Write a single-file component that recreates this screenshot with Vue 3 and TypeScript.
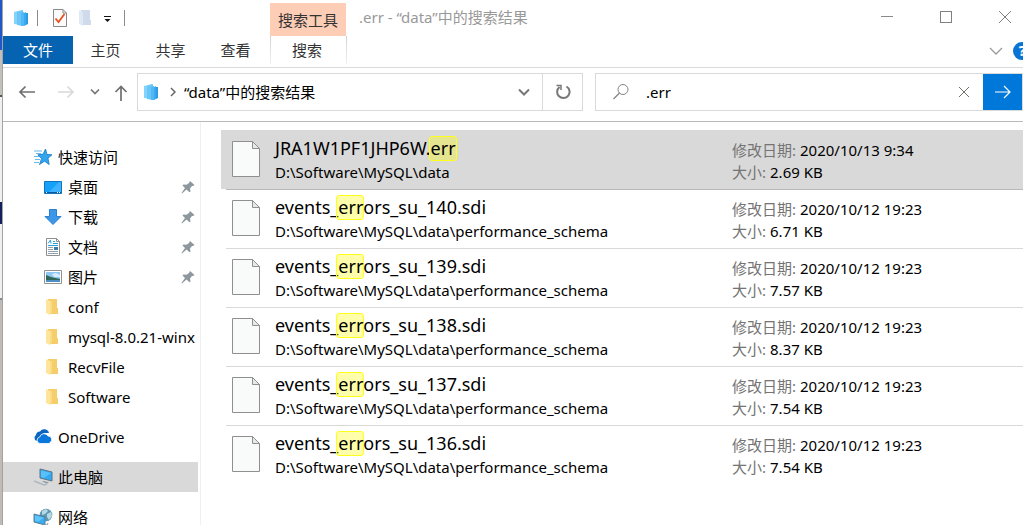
<script setup lang="ts">
import { ref } from 'vue'

interface Place {
  name: string
  icon: 'star' | 'desktop' | 'download' | 'document' | 'picture' | 'folder' | 'cloud' | 'pc' | 'network'
  root?: boolean
  pinned?: boolean
  active?: boolean
}
interface Result {
  before: string
  match: string
  after: string
  path: string
  date: string
  size: string
}

const query = ref('.err')
const tabs: string[] = ['主页', '共享', '查看']

const groups: Place[][] = [
  [
    { name: '快速访问', icon: 'star', root: true },
    { name: '桌面', icon: 'desktop', pinned: true },
    { name: '下载', icon: 'download', pinned: true },
    { name: '文档', icon: 'document', pinned: true },
    { name: '图片', icon: 'picture', pinned: true },
    { name: 'conf', icon: 'folder' },
    { name: 'mysql-8.0.21-winx', icon: 'folder' },
    { name: 'RecvFile', icon: 'folder' },
    { name: 'Software', icon: 'folder' },
  ],
  [{ name: 'OneDrive', icon: 'cloud', root: true }],
  [{ name: '此电脑', icon: 'pc', root: true, active: true }],
  [{ name: '网络', icon: 'network', root: true }],
]

const schema = 'D:\\Software\\MySQL\\data\\performance_schema'
const event = (id: number, size: string): Result => ({
  before: 'events_',
  match: 'err',
  after: `ors_su_${id}.sdi`,
  path: schema,
  date: '2020/10/12 19:23',
  size,
})
const results: Result[] = [
  { before: 'JRA1W1PF1JHP6W.', match: 'err', after: '', path: 'D:\\Software\\MySQL\\data', date: '2020/10/13 9:34', size: '2.69 KB' },
  event(140, '6.71 KB'),
  event(139, '7.57 KB'),
  event(138, '8.37 KB'),
  event(137, '7.54 KB'),
  event(136, '7.54 KB'),
]
const selected = ref(0)
</script>

<template>
  <div class="screen" lang="zh-CN">
    <div class="behind" aria-hidden="true"></div>
    <div class="window">
      <header class="top">
        <div class="quick">
          <svg class="app" width="16" height="18" viewBox="0 0 16 18">
            <path d="M1 3 9 1v15l-8-1z" fill="#83d4fb" />
            <path d="M4 3l6-2v16l-6-1z" fill="#6ac6f8" />
            <path d="M8 4l3-1v14l-3 0z" fill="#4fb9f5" /><path d="M11 4l2-1v13l-2 1z" fill="#3aa9ee" /><path d="M13 4l2 0v11l-2 1z" fill="#2b9be6" />
          </svg>
          <span class="bar"></span>
          <button class="plain check" type="button" aria-label="属性">
            <svg width="16" height="20" viewBox="0 0 16 20">
              <path d="M1.5 1.5h9.500l3.500 3.500v13.500h-13z" fill="#fbfbfb" stroke="#8a8a8a" />
              <path d="M11 1.500v3.500h3.500" fill="none" stroke="#8a8a8a" />
              <path d="M3.500 10.500l3 3.500 6-8" fill="none" stroke="#e8501e" stroke-width="1.800" />
            </svg>
          </button>
          <button class="plain newf" type="button" aria-label="新建文件夹">
            <svg width="14" height="18" viewBox="0 0 14 18">
              <path d="M3 1h9v10h1v5H3z" fill="#cfdaea" /><path d="M1 1l4 2v14l-4-2z" fill="#e0e8f3" />
            </svg>
          </button>
          <button class="plain more" type="button" aria-label="自定义快速访问工具栏">
            <svg width="9" height="8" viewBox="0 0 9 8"><path d="M1 1.500h7" stroke="#111" /><path d="M1.500 4h6l-3 3z" fill="#111" /></svg>
          </button>
          <span class="bar"></span>
        </div>
        <div class="context">搜索工具</div>
        <h1 class="caption">.err - “data”中的搜索结果</h1>
        <div class="controls">
          <button class="plain" type="button" aria-label="最小化"><svg width="14" height="14"><path d="M1 6.500h12" stroke="#8a8a8a" /></svg></button>
          <button class="plain" type="button" aria-label="最大化"><svg width="14" height="14"><rect x="1.500" y="1.500" width="11" height="11" fill="none" stroke="#808080" /></svg></button>
          <button class="plain" type="button" aria-label="关闭"><svg width="14" height="14"><path d="M1 1l12 12M13 1L1 13" stroke="#808080" /></svg></button>
        </div>
      </header>

      <nav class="ribbon">
        <button class="tab file" type="button">文件</button>
        <button v-for="t in tabs" :key="t" class="tab" type="button">{{ t }}</button>
        <button class="tab search-tab" type="button">搜索</button>
        <button class="plain expand" type="button" aria-label="展开功能区">
          <svg width="14" height="8" viewBox="0 0 14 8"><path d="M1 1l6 6 6-6" fill="none" stroke="#9a9a9a" stroke-width="1.300" /></svg>
        </button>
        <button class="plain help" type="button" aria-label="帮助">?</button>
      </nav>

      <div class="location">
        <div class="arrows">
          <button class="plain" type="button" aria-label="后退">
            <svg width="18" height="14" viewBox="0 0 18 14"><path d="M2 7h15M7.500 1.500L2 7l5.500 5.500" fill="none" stroke="#6f6f6f" stroke-width="1.700" /></svg>
          </button>
          <button class="plain fwd" type="button" aria-label="前进">
            <svg width="18" height="14" viewBox="0 0 18 14"><path d="M1 7h15M10.500 1.500L16 7l-5.500 5.500" fill="none" stroke="#d9d9d9" stroke-width="1.700" /></svg>
          </button>
          <button class="plain recent" type="button" aria-label="最近位置">
            <svg width="10" height="8" viewBox="0 0 10 8"><path d="M1 1.500l4 4 4-4" fill="none" stroke="#777" stroke-width="1.700" /></svg>
          </button>
          <button class="plain up" type="button" aria-label="向上">
            <svg width="14" height="18" viewBox="0 0 14 18"><path d="M7 17V3M1.500 8L7 2.500 12.500 8" fill="none" stroke="#707070" stroke-width="1.700" /></svg>
          </button>
        </div>
        <div class="address">
          <svg class="app" width="16" height="18" viewBox="0 0 16 18">
            <path d="M1 3 9 1v15l-8-1z" fill="#83d4fb" />
            <path d="M4 3l6-2v16l-6-1z" fill="#6ac6f8" />
            <path d="M8 4l3-1v14l-3 0z" fill="#4fb9f5" /><path d="M11 4l2-1v13l-2 1z" fill="#3aa9ee" /><path d="M13 4l2 0v11l-2 1z" fill="#2b9be6" />
          </svg>
          <svg class="crumb" width="6" height="10" viewBox="0 0 6 10"><path d="M1 1l4 4-4 4" fill="none" stroke="#666" stroke-width="1.500" /></svg>
          <span class="where">“data”中的搜索结果</span>
          <button class="plain drop" type="button" aria-label="以前的位置">
            <svg width="12" height="8" viewBox="0 0 12 8"><path d="M1 1.500l5 5 5-5" fill="none" stroke="#777" stroke-width="2" /></svg>
          </button>
          <button class="plain refresh" type="button" aria-label="刷新">
            <svg width="16" height="16" viewBox="0 0 16 16">
              <path d="M11.500 2.500A6.200 6.200 0 1 1 4.500 3" fill="none" stroke="#777" stroke-width="2" />
              <path d="M1.500 1.500h4.500v4.500" fill="none" stroke="#777" stroke-width="1.500" />
            </svg>
          </button>
        </div>
        <form class="search" role="search" @submit.prevent>
          <svg width="18" height="18" viewBox="0 0 18 18"><circle cx="11" cy="6.500" r="5" fill="none" stroke="#848484" /><path d="M7.500 10L1.500 16" stroke="#848484" stroke-width="1.200" /></svg>
          <input v-model="query" type="text" aria-label="搜索" />
          <button class="plain clear" type="button" aria-label="清除" @click="query = ''">
            <svg width="12" height="12"><path d="M1 1l10 10M11 1L1 11" stroke="#74706c" /></svg>
          </button>
          <button class="plain go" type="submit" aria-label="开始搜索">
            <svg width="18" height="14" viewBox="0 0 18 14"><path d="M1 7h15M10 1l6 6-6 6" fill="none" stroke="#fff" stroke-width="1.200" /></svg>
          </button>
        </form>
      </div>

      <div class="body">
        <aside class="side">
          <ul v-for="(g, gi) in groups" :key="gi">
            <li v-for="p in g" :key="p.name">
              <a href="#" class="place" :class="{ root: p.root, active: p.active }" @click.prevent>
                <svg v-if="p.icon === 'star'" width="20" height="18" viewBox="0 0 20 18">
                  <path d="M1 3h8M3 5.500h5M1 8.500h5M2 11.500h5M1 14.500h5" stroke="#69b9ee" />
                  <path d="M12.500 1l1.500 5.500 5 .200-4 3.500 1.200 6.300-4.700-3.300-5 3.300 2-5.800L5 6.700l5-.400z" fill="#32a5ee" stroke="#1579c4" stroke-width=".8" />
                </svg>
                <svg v-else-if="p.icon === 'desktop'" width="20" height="18" viewBox="0 0 20 18">
                  <path d="M1.500 3.500h17v12h-17z" fill="#15a0fa" stroke="#1173bd" /><path d="M6 14L16 4h2v10z" fill="#3db2ff" /><path d="M2 14.500h16" stroke="#075a9d" /><path d="M3 14.500h1M14 14.500h1M16 14.500h1" stroke="#fff" />
                </svg>
                <svg v-else-if="p.icon === 'download'" width="20" height="18" viewBox="0 0 20 18">
                  <path d="M6.500 1.500h7v7H18l-8 8-8-8h4.500z" fill="#3b97e8" stroke="#2b7fd0" />
                </svg>
                <svg v-else-if="p.icon === 'document'" width="20" height="20" viewBox="0 0 20 20">
                  <path d="M3.500 1.500h10l3 3v14h-13z" fill="#fff" stroke="#8d9090" /><path d="M13.500 1.500v3h3" fill="none" stroke="#8d9090" />
                  <path d="M5 6.500L7.500 3 8 6.500M10 4.500h2M10 6.500h5M5 8.500h10" fill="none" stroke="#2d9fd9" /><path d="M5 10.500h5M5 12.500h5M5 14.500h10M5 16.500h10" stroke="#92a1ab" /><path d="M11 10h4v3h-4z" fill="#3b7ba3" />
                </svg>
                <svg v-else-if="p.icon === 'picture'" width="20" height="18" viewBox="0 0 20 18">
                  <path d="M1.500 2.500h17v13h-17z" fill="#fff" stroke="#929292" /><path d="M3 4h14v10H3z" fill="#8fc7f4" /><path d="M9 6l4-1 4 2v2h-6z" fill="#d8edfb" /><path d="M3 7l5 2 9 2v1H3z" fill="#2f6656" /><path d="M3 12h14v2H3z" fill="#4d8fc4" />
                </svg>
                <svg v-else-if="p.icon === 'folder'" width="20" height="18" viewBox="0 0 20 18">
                  <path d="M5 1h9v9h1v6H5z" fill="#f5cd6b" /><path d="M3 1l4 2v14l-4-2z" fill="#ffe59b" /><path d="M7 3h2v11l-2 3z" fill="#fbdc86" />
                </svg>
                <svg v-else-if="p.icon === 'cloud'" width="20" height="18" viewBox="0 0 20 18">
                  <path d="M3.500 13A3.500 3.500 0 0 1 3 7a4 4 0 0 1 4-3.500 5 5 0 0 1 9 1.500l-5 0-5 5z" fill="#0a66c0" />
                  <path d="M7 15.500a3.300 3.300 0 0 1-.300-6.500A4.500 4.500 0 0 1 15 8a3.500 3.500 0 0 1 2 6.500l-1 1z" fill="#0a78da" stroke="#fff" stroke-width=".8" />
                </svg>
                <svg v-else-if="p.icon === 'pc'" width="20" height="18" viewBox="0 0 20 18">
                  <path d="M7 1l12 3v9L7 10z" fill="#31a9f3" stroke="#5f7480" /><path d="M8 2.500l10 2.500-7 5-3-1z" fill="#58c0fb" /><path d="M11 13l5 1.500-2 1-5-2z" fill="#8b969d" /><path d="M1 13l10 4 3-1" fill="none" stroke="#aeb8bf" stroke-width="1.500" />
                </svg>
                <svg v-else width="20" height="18" viewBox="0 0 20 18">
                  <circle cx="13" cy="7" r="6.300" fill="#5e97b5" /><path d="M9 3l4-2 2 2-3 3-3 1zM14 6l4-2 1 4-3 4-2-3z" fill="#b7d9df" />
                  <path d="M1 6l11 3v8L1 14z" fill="#35aef7" stroke="#5a7a8c" /><path d="M2 7.500l9 2.300-6 4-3-1z" fill="#61c5fd" /><path d="M9 17h5l1-2" stroke="#83949c" fill="none" />
                </svg>
                <span class="pname">{{ p.name }}</span>
                <svg v-if="p.pinned" class="pin" width="14" height="14" viewBox="0 0 14 14">
                  <path d="M9 1l4.500 4-1.500 1-1 0-2 2.500.500 3-1 .800L5.500 9.500 1 13.500l-.500-.500L4 8 1.500 5.500l1-1 3 .300L8 3z" fill="#8d979e" />
                </svg>
              </a>
            </li>
          </ul>
        </aside>

        <main class="results">
          <article v-for="(r, i) in results" :key="i" class="result" :class="{ selected: i === selected }" @click="selected = i">
            <svg class="sheet" width="30" height="38" viewBox="0 0 30 38">
              <path d="M1.500 1.500h20l7 7v28h-27z" fill="#f9fafa" stroke="#8f8f8f" /><path d="M21.500 1.500v7h7z" fill="#e8e8e8" stroke="#8f8f8f" />
            </svg>
            <div class="names">
              <h2>{{ r.before }}<mark>{{ r.match }}</mark>{{ r.after }}</h2>
              <p>{{ r.path }}</p>
            </div>
            <dl class="meta">
              <div><dt>修改日期:</dt><dd>{{ r.date }}</dd></div>
              <div><dt>大小:</dt><dd>{{ r.size }}</dd></div>
            </dl>
          </article>
        </main>
      </div>
    </div>
  </div>
</template>

<style>
body { margin: 0; background: #fff; }
</style>

<style scoped>
* { box-sizing: border-box; }
.screen {
  display: flex;
  height: 100vh;
  overflow: hidden;
  font-family: "Noto Sans", "Noto Sans CJK SC", sans-serif;
  font-size: 15px;
  line-height: 22px;
  color: #000;
}
.behind {
  flex: none;
  width: 3px;
  border-right: 1px solid #a3a3a3;
  background: linear-gradient(#2257c9 0 50px, #c3bfba 50px 95px, #555 95px 97px, #f0f0f0 97px 202px, #14205c 202px 224px, #f0f0f0 224px 298px, #8a8a8a 298px 300px, #c0bbb6 300px);
}
.window { flex: 1; min-width: 0; display: flex; flex-direction: column; background: #fff; }
.plain { border: 0; padding: 0; background: none; display: flex; align-items: center; justify-content: center; }
svg { display: block; flex: none; }

.top { display: flex; height: 36px; }
.quick { width: 267px; display: flex; align-items: center; padding-left: 10px; }
.bar { width: 1px; height: 16px; background: #8c8c8c; }
.quick .app { margin-right: 8px; }
.check { margin-left: 14px; }
.newf { margin-left: 10px; }
.more { margin: 2px 12px 0 11px; }
.context { width: 76px; margin-top: 3px; background: #fdcdb5; text-align: center; line-height: 34px; color: #333; }
.caption { margin: 0 0 0 13px; font-size: 15px; font-weight: 400; line-height: 34px; color: #999; flex: 1; }
.controls { display: flex; align-items: center; gap: 45px; padding: 0 11px 2px 0; }

.ribbon { display: flex; align-items: flex-start; height: 32px; border-bottom: 1px solid #d9dadb; overflow: hidden; }
.tab { height: 28px; width: 65px; padding: 0; border: 0; background: none; font: inherit; color: #333; }
.file { width: 70px; background: #0563b1; color: #fff; }
.search-tab { width: 77px; margin-left: 2px; padding-right: 3px; border: 1px solid; border-width: 0 1px; border-image: linear-gradient(#d0d0d0, #f2f2f2) 1; }
.expand { margin: 11px 10px 0 auto; }
.help { width: 18px; height: 18px; margin: 6px -8px 0 0; border-radius: 50%; background: #0a74d4; color: #fff; font: bold 14px/18px "Noto Sans", sans-serif; }

.location { display: grid; grid-template-columns: 134px minmax(0, 446fr) minmax(0, 440fr); height: 54px; padding: 5px 0 10px; border-bottom: 1px solid #b9b9b9; }
.arrows { display: flex; align-items: center; padding-left: 15px; }
.fwd { margin-left: 21px; }
.recent { margin-left: 15px; }
.up { margin: 2px 0 0 14px; }
.address { display: flex; align-items: center; border: 1px solid #d9dadb; padding-left: 5px; }
.crumb { margin: 0 8px 0 11px; }
.where { flex: 1; white-space: nowrap; }
.drop { margin-right: 12px; }
.refresh { width: 40px; height: 100%; border-left: 1px solid #d9dadb; }
.search { display: flex; align-items: center; margin-left: 12px; border: 1px solid #d9dadb; padding-left: 16px; }
.search input { flex: 1; min-width: 0; margin-left: 16px; border: 0; outline: 0; padding: 0; font: inherit; color: #000; background: none; }
.clear { margin-right: 13px; }
.go { width: 39px; height: 100%; background: #0078d9; }

.body { flex: 1; min-height: 0; display: flex; }
.side { flex: none; width: 198px; padding: 20px 2px 0 0; border-right: 1px solid #f0f0f0; overflow: hidden; }
.side ul { list-style: none; margin: 0 0 10px; padding: 0; }
.place { display: flex; align-items: center; height: 30px; padding-left: 40px; color: #000; text-decoration: none; }
.root { padding-left: 30px; }
.active { background: #d9d9d9; }
.pname { flex: 1; min-width: 0; margin-left: 5px; overflow: hidden; white-space: nowrap; }
.pin { margin-right: 3px; }

.results { flex: 1; min-width: 0; padding: 8px 0 0 20px; }
.result { position: relative; display: flex; height: 59px; padding-left: 10px; }
.result::after { content: ""; position: absolute; left: 5px; right: 0; bottom: -1px; height: 1px; background: #d9d9d9; }
.result:last-child::after { display: none; }
.selected { background: #d9d9d9; }
.selected::after { background: #b9b9b9; }
.sheet { margin-top: 10px; }
.names { flex: 1; min-width: 0; margin-left: 14px; }
.names h2 { margin: 6px 0 0; font-size: 18px; line-height: 25px; font-weight: 400; white-space: nowrap; }
.names p { margin: 0; line-height: 22px; white-space: nowrap; }
mark { display: inline-block; line-height: 23px; margin: 0 -1px 0 -2px; padding: 0 0 0 1px; border: 1px solid #ffff1c; border-radius: 3px; background: rgba(255, 255, 0, 0.33); color: inherit; }
.meta { flex: none; width: 291px; margin: 9px 0 0; }
.meta div { display: flex; gap: 4px; }
.meta dt { color: #747474; }
.meta dd { margin: 0; }
</style>
